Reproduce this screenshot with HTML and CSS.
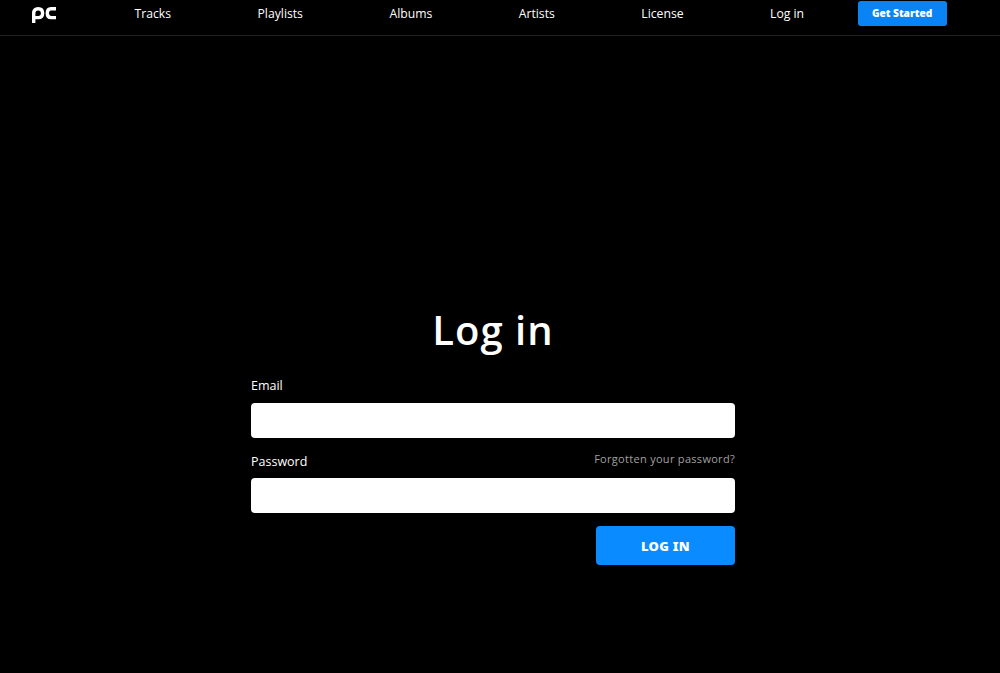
FILE: index.html
```html
<!DOCTYPE html>
<html lang="en">
<head>
  <meta charset="UTF-8">
  <title>Log in</title>
  <link rel="stylesheet" href="styles.css">
</head>
<body>

  <header class="topbar">
    <a class="logo" href="#" aria-label="Home">
      <svg width="24" height="16" viewBox="0 0 24 16" fill="none" stroke="#fff" stroke-width="3.4">
        <path d="M1.7 16V6.5Q1.7 1.7 6.2 1.7Q10.6 1.7 10.6 6.2Q10.6 10.6 6.2 10.6H3"/>
        <path d="M24 1.7H19Q15.3 1.7 15.3 6.2Q15.3 10.6 19 10.6H24"/>
      </svg>
    </a>
    <nav class="links">
      <a href="#">Tracks</a>
      <a href="#">Playlists</a>
      <a href="#">Albums</a>
      <a href="#">Artists</a>
      <a href="#">License</a>
      <a href="#">Log in</a>
    </nav>
    <a class="get-started" href="#">Get Started</a>
  </header>

  <main class="login">
    <h1>Log in</h1>
    <form>
      <div class="field-head">
        <label for="email">Email</label>
      </div>
      <input type="email" id="email">
      <div class="field-head">
        <label class="password-label" for="password">Password</label>
        <a class="forgot" href="#">Forgotten your password?</a>
      </div>
      <input type="password" id="password">
      <div class="actions">
        <button type="button">LOG IN</button>
      </div>
    </form>
  </main>

</body>
</html>
```

FILE: styles.css
```css
body {
  margin: 0;
  background: #000;
  color: #fff;
  font-family: "Open Sans", "Noto Sans", sans-serif;
}
a {
  color: inherit;
  text-decoration: none;
}

.topbar {
  display: flex;
  align-items: flex-start;
  box-sizing: border-box;
  height: 36px;
  padding: 1px 0 0 32px;
  border-bottom: 1px solid #222;
}
.logo {
  display: flex;
  margin-top: 6px;
  margin-right: 78.5px;
}
.links {
  display: flex;
  gap: 86.5px;
  font-size: 12.2px;
  line-height: 25px;
}
.get-started {
  margin-left: 53.5px;
  width: 89px;
  height: 25px;
  line-height: 25px;
  text-align: center;
  background: #0a84f5;
  border-radius: 3px;
  font-family: "Noto Sans", sans-serif;
  font-size: 10.2px;
  font-weight: 900;
}

.login {
  width: 484px;
  margin: 0 0 0 251px;
  padding-top: 268px;
}
h1 {
  margin: 0 0 21px;
  font-size: 40px;
  font-weight: 600;
  line-height: 52px;
  letter-spacing: 1px;
  text-align: center;
}
.field-head {
  display: flex;
  justify-content: space-between;
  align-items: baseline;
  height: 18px;
  margin-bottom: 8px;
  font-size: 12.5px;
  line-height: 18px;
}
.password-label {
  position: relative;
  top: 1px;
}
.forgot {
  position: relative;
  top: -2px;
  color: #a0a0a0;
  font-size: 11px;
  letter-spacing: 0.3px;
}
input {
  display: block;
  box-sizing: border-box;
  width: 100%;
  height: 35px;
  margin-bottom: 14px;
  border: none;
  border-radius: 4px;
  background: #fff;
}
.actions {
  display: flex;
  justify-content: flex-end;
  margin-top: -1px;
}
button {
  width: 139px;
  height: 39px;
  border: none;
  border-radius: 4px;
  background: #0a8bff;
  color: #fff;
  font-family: "Noto Sans", sans-serif;
  font-size: 13px;
  font-weight: 900;
  letter-spacing: 0.3px;
}
```
